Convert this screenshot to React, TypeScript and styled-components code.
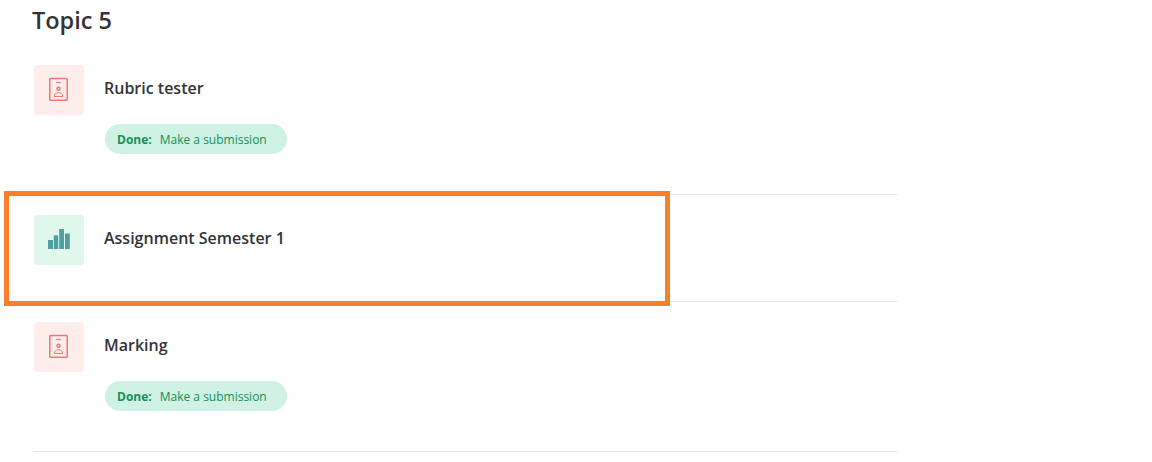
import React from 'react';
import styled, { createGlobalStyle } from 'styled-components';

const GlobalStyle = createGlobalStyle`
  body {
    margin: 0;
    background: #fff;
    color: #343338;
    font-family: 'Open Sans', 'Noto Sans', sans-serif;
  }
`;

const Section = styled.section`
  width: 864px;
  height: 462px;
  padding-left: 33px;
  box-sizing: content-box;
`;

const Heading = styled.h3`
  height: 45px;
  margin: 0 0 0 -1px;
  font-size: 23.5px;
  font-weight: 600;
  line-height: 40px;
`;

const Row = styled.div`
  position: relative;
  padding: 20px 0 36px 1px;
  border-bottom: 1px solid #e6e6e6;
`;

const Highlight = styled.div`
  position: absolute;
  top: -4px;
  left: -29px;
  box-sizing: border-box;
  width: 666px;
  height: 115px;
  border: 5px solid #fb7f28;
`;

const Main = styled.div`
  display: flex;
  align-items: center;
  height: 50px;
`;

const IconBox = styled.div<{ tone: 'red' | 'green' }>`
  display: flex;
  align-items: center;
  justify-content: center;
  box-sizing: border-box;
  width: 50px;
  height: 50px;
  margin-right: 20px;
  padding: 0 1px 2px 0;
  border-radius: 4px;
  background: ${p => (p.tone === 'red' ? '#ffedeb' : '#dff8eb')};
`;

const Name = styled.span`
  font-size: 16px;
  font-weight: 600;
  line-height: 24px;
  margin-top: -4px;
`;

const Badge = styled.div`
  display: flex;
  align-items: center;
  box-sizing: border-box;
  width: 182px;
  height: 30px;
  margin: 9px 0 4px 71px;
  padding-left: 12px;
  border-radius: 15px;
  background: #cff2e4;
  color: #159059;
  font-size: 12px;
  white-space: nowrap;

  b {
    margin-right: 8px;
    font-weight: 700;
  }
`;

const AssignmentIcon = () => (
  <svg width="19" height="24" viewBox="0 0 19 24" fill="none" stroke="#ec7972">
    <rect x=".75" y="1.6" width="17.5" height="21.6" rx="1" strokeWidth="1.5" />
    <path d="M7 5.5h5" strokeWidth="1" />
    <circle cx="9.5" cy="11.8" r="1.5" strokeWidth="1.5" />
    <path d="M5.2 19.5c0-2.2 1.8-3.8 4.3-3.8s4.3 1.6 4.3 3.8z" strokeWidth="1" />
  </svg>
);

const ChartIcon = () => (
  <svg width="22" height="20" viewBox="0 0 22 20" fill="#529fa2">
    <path d="M0 11h5v9H0zM5.8 6.3h4.4V20H5.8zM11.2 0h4.8v20h-4.8zM17 4.4h4.8V20H17z" />
  </svg>
);

type TActivity = {
  name: string;
  graded?: boolean;
  highlighted?: boolean;
};

const activities: TActivity[] = [
  { name: 'Rubric tester' },
  { name: 'Assignment Semester 1', graded: true, highlighted: true },
  { name: 'Marking' },
];

const Activity: React.FunctionComponent<TActivity> = ({
  name,
  graded = false,
  highlighted = false,
}) => (
  <Row>
    <Main>
      <IconBox tone={graded ? 'green' : 'red'}>
        {graded ? <ChartIcon /> : <AssignmentIcon />}
      </IconBox>
      <Name>{name}</Name>
    </Main>
    {!graded && (
      <Badge>
        <b>Done:</b>
        <span>Make a submission</span>
      </Badge>
    )}
    {highlighted && <Highlight />}
  </Row>
);

const App = () => (
  <>
    <GlobalStyle />
    <Section>
      <Heading>Topic 5</Heading>
      {activities.map(activity => (
        <Activity key={activity.name} {...activity} />
      ))}
    </Section>
  </>
);

export default App;
